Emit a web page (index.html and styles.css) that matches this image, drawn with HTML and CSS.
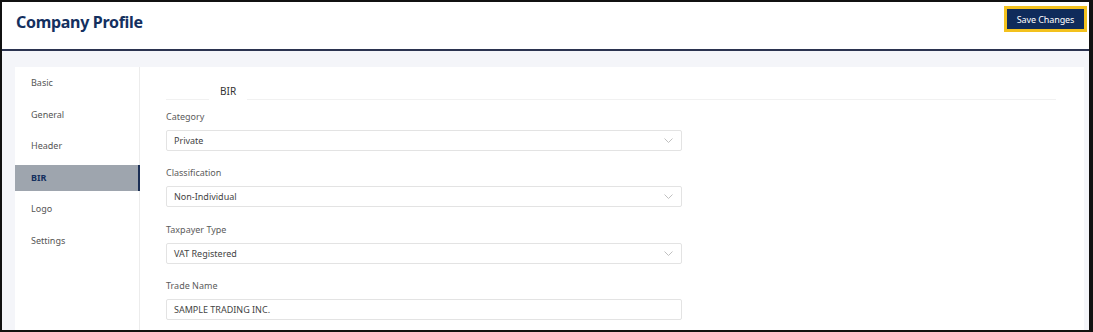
FILE: index.html
```html
<!DOCTYPE html>
<html lang="en">
<head>
<meta charset="utf-8">
<title>Company Profile</title>
<link rel="stylesheet" href="styles.css">
</head>
<body>
<div class="frame">
  <header class="topbar">
    <h1 class="title">Company Profile</h1>
    <button class="btn-save" type="button">Save Changes</button>
  </header>
  <main class="page">
    <div class="card">
      <nav class="sidenav">
        <a class="nav-item">Basic</a>
        <a class="nav-item">General</a>
        <a class="nav-item">Header</a>
        <a class="nav-item active">BIR</a>
        <a class="nav-item">Logo</a>
        <a class="nav-item">Settings</a>
      </nav>
      <section class="content">
        <div class="tabs"><span class="tab">BIR</span></div>
        <div class="form">
          <div class="group">
            <label class="label">Category</label>
            <div class="select"><span>Private</span><svg class="chev" viewBox="0 0 9 5" width="9" height="5"><path d="M0.5 0.5 L4.5 4.5 L8.5 0.5" fill="none" stroke="#b9b9b9" stroke-width="0.9"/></svg></div>
          </div>
          <div class="group">
            <label class="label">Classification</label>
            <div class="select"><span>Non-Individual</span><svg class="chev" viewBox="0 0 9 5" width="9" height="5"><path d="M0.5 0.5 L4.5 4.5 L8.5 0.5" fill="none" stroke="#b9b9b9" stroke-width="0.9"/></svg></div>
          </div>
          <div class="group">
            <label class="label">Taxpayer Type</label>
            <div class="select"><span>VAT Registered</span><svg class="chev" viewBox="0 0 9 5" width="9" height="5"><path d="M0.5 0.5 L4.5 4.5 L8.5 0.5" fill="none" stroke="#b9b9b9" stroke-width="0.9"/></svg></div>
          </div>
          <div class="group">
            <label class="label">Trade Name</label>
            <div class="select input"><span>SAMPLE TRADING INC.</span></div>
          </div>
        </div>
      </section>
    </div>
  </main>
</div>
</body>
</html>
```

FILE: styles.css
```css
* { box-sizing: border-box; }
html, body { margin: 0; padding: 0; }
body {
  font-family: "Noto Sans", "Open Sans", sans-serif;
  background: #111;
}
.frame {
  width: 1093px;
  height: 332px;
  border-style: solid;
  border-color: #111;
  border-width: 2px 4px 2px 2px;
  display: flex;
  flex-direction: column;
  background: #f4f5f9;
  overflow: hidden;
}
.topbar {
  height: 49px;
  flex: none;
  background: #fff;
  border-bottom: 2px solid #2b3350;
  display: flex;
  align-items: flex-start;
  justify-content: space-between;
  padding: 0 2px 0 14px;
}
.title {
  margin: 8px 0 0;
  font-size: 16px;
  line-height: 24px;
  font-weight: 700;
  color: #14305f;
  letter-spacing: -0.3px;
}
.btn-save {
  margin-top: 4px;
  width: 83px;
  height: 26px;
  background: #0f2b5b;
  border: 3px solid #f3c11d;
  color: #fff;
  font-family: inherit;
  font-size: 9px;
  padding: 0;
  letter-spacing: -0.1px;
}
.page {
  flex: 1;
  padding: 16px 5px 0 13px;
  display: flex;
  min-height: 0;
}
.card {
  flex: 1;
  background: #fff;
  display: flex;
}
.sidenav {
  width: 125px;
  flex: none;
  border-right: 1px solid #ececec;
  display: flex;
  flex-direction: column;
  gap: 5.6px;
  padding-top: 3px;
}
.nav-item {
  height: 26px;
  line-height: 26px;
  padding-left: 16px;
  font-size: 9px;
  color: #555;
}
.nav-item.active {
  background: #9ea5ae;
  color: #14305f;
  font-weight: 700;
  margin-right: -1px;
  border-right: 2px solid #1b2f55;
}
.content {
  flex: 1;
  padding: 16px 28px 0 26px;
}
.tabs {
  border-bottom: 1px solid #f1f1f1;
  display: flex;
  padding-left: 43px;
  height: 17px;
}
.tab {
  padding: 0 11px;
  font-size: 10px;
  line-height: 16px;
  color: #333;
  background: #fff;
  border-bottom: 1px solid #fff;
  height: 17px;
}
.form {
  padding-top: 10px;
  width: 516px;
}
.group {
  margin-bottom: 15.3px;
}
.label {
  display: block;
  font-size: 9px;
  line-height: 14px;
  color: #5c5c5c;
  margin-bottom: 6px;
}
.select {
  height: 21px;
  border: 1px solid #e3e3e3;
  border-radius: 2px;
  display: flex;
  align-items: center;
  justify-content: space-between;
  padding: 0 8px 0 7px;
  font-size: 9px;
  color: #444;
}
.chev { display: block; }
```
